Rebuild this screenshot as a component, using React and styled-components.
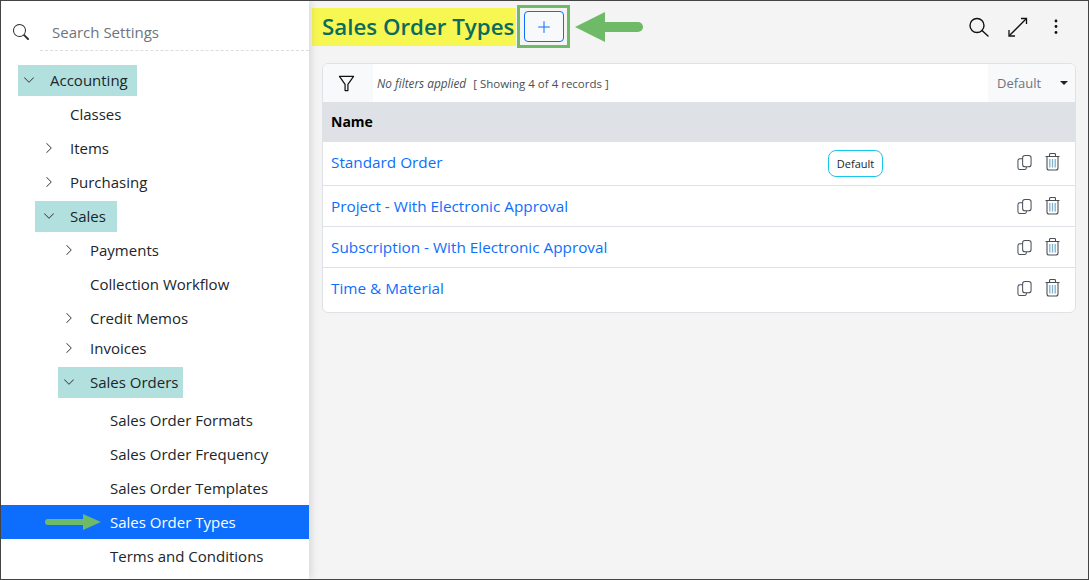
import React from 'react'
import styled, { createGlobalStyle } from 'styled-components'
import { BsSearch, BsChevronDown, BsChevronRight, BsPlusLg } from 'react-icons/bs'

const Global = createGlobalStyle`
  html, body { margin: 0; padding: 0; }
  body { font-family: "Open Sans", "Noto Sans", "Liberation Sans", sans-serif; color: #212529; }
  * { box-sizing: border-box; }
`

const menu = [
  { label: 'Accounting', depth: 0, open: true, mark: true, h: 34, end: 9 },
  { label: 'Classes', depth: 1, h: 34 },
  { label: 'Items', depth: 1, closed: true, h: 34 },
  { label: 'Purchasing', depth: 1, closed: true, h: 34 },
  { label: 'Sales', depth: 1, open: true, mark: true, h: 34, start: 3, end: 11 },
  { label: 'Payments', depth: 2, closed: true, h: 34 },
  { label: 'Collection Workflow', depth: 2, h: 34 },
  { label: 'Credit Memos', depth: 2, closed: true, h: 34 },
  { label: 'Invoices', depth: 2, closed: true, h: 26 },
  { label: 'Sales Orders', depth: 2, open: true, mark: true, h: 42, end: 4 },
  { label: 'Sales Order Formats', depth: 3, h: 34 },
  { label: 'Sales Order Frequency', depth: 3, h: 34 },
  { label: 'Sales Order Templates', depth: 3, h: 34 },
  { label: 'Sales Order Types', depth: 3, active: true, h: 34 },
  { label: 'Terms and Conditions', depth: 3, h: 34 },
]

const records = [
  { name: 'Standard Order', isDefault: true, h: 44, pad: 3 },
  { name: 'Project - With Electronic Approval', h: 41, pad: 0 },
  { name: 'Subscription - With Electronic Approval', h: 41, pad: 0 },
  { name: 'Time & Material', h: 44, pad: 4 },
]

const Window = styled.div`
  width: 1089px;
  height: 580px;
  display: flex;
  overflow: hidden;
  border: 1px solid #444;
  background: #f4f4f4;
`

const Sidebar = styled.aside`
  width: 308px;
  flex: none;
  background: #fff;
  box-shadow: 2px 0 8px rgba(0, 0, 0, 0.12);
  position: relative;
`

const SearchRow = styled.div`
  height: 50px;
  display: flex;
  align-items: center;
  padding: 12px 0 0 12px;
  color: #333;
  font-size: 16px;
`

const SearchText = styled.div`
  flex: 1;
  height: 38px;
  margin-left: 11px;
  padding: 1px 0 0 12px;
  display: flex;
  align-items: center;
  font-size: 15px;
  color: #6c757d;
  border-bottom: 1px dashed #ddd;
`

const Tree = styled.div`
  margin-top: 12px;
`

const Row = styled.div`
  display: flex;
  align-items: center;
  height: ${(p) => p.$h}px;
  padding-left: ${(p) => p.$depth * 20 + 17}px;
  font-size: 15px;
  background: ${(p) => (p.$active ? '#0d6efd' : 'transparent')};
  color: ${(p) => (p.$active ? '#fff' : '#212529')};
  position: relative;
`

const Label = styled.div`
  display: flex;
  align-items: center;
  height: 31px;
  margin-left: ${(p) => -p.$start}px;
  padding-left: ${(p) => p.$start}px;
  padding-right: ${(p) => p.$end}px;
  background: ${(p) => (p.$mark ? '#b2e0df' : 'transparent')};
`

const Caret = styled.span`
  width: 32px;
  flex: none;
  display: flex;
  justify-content: flex-start;
  padding-left: 5px;
  font-size: 12px;
  color: #333;
`

const SideArrow = styled.svg`
  position: absolute;
  left: 43px;
  top: 8px;
`

const Main = styled.main`
  flex: 1;
  padding: 4px 12px 0 13px;
  min-width: 0;
`

const TopBar = styled.div`
  display: flex;
  align-items: center;
  height: 43px;
  margin-left: -10px;
`

const Title = styled.h1`
  align-self: flex-start;
  margin: 3px 0 0;
  height: 38px;
  padding: 0 2px 2px 10px;
  display: flex;
  align-items: center;
  background: #f7f752;
  color: #0b6b5c;
  font-size: 22.3px;
  font-weight: 600;
  white-space: nowrap;
`

const AddFrame = styled.div`
  width: 53px;
  height: 43px;
  flex: none;
  margin-left: 1px;
  display: flex;
  align-items: center;
  justify-content: center;
  border: 3px solid #6fba67;
`

const AddButton = styled.button`
  width: 40px;
  height: 31px;
  padding: 0;
  display: flex;
  align-items: center;
  justify-content: center;
  background: #f8f9fa;
  border: 1px solid #0d6efd;
  border-radius: 4px;
  color: #0d6efd;
  font-size: 16px;
`

const BigArrow = styled.svg`
  margin-left: 5px;
`

const Tools = styled.div`
  margin-left: auto;
  display: flex;
  align-items: center;
  gap: 18px;
  padding-right: 10px;
  color: #111;
`

const Card = styled.section`
  margin-top: 15px;
  border: 1px solid #dee2e6;
  border-radius: 6px;
  background: #fff;
  overflow: hidden;
`

const FilterBar = styled.div`
  height: 38px;
  display: flex;
  align-items: center;
  color: #495057;
`

const FunnelCell = styled.div`
  width: 50px;
  height: 100%;
  display: flex;
  align-items: center;
  justify-content: center;
  padding-right: 4px;
  background: #f8f9fa;
  color: #111;
`

const FilterNote = styled.em`
  margin-left: 4px;
  font-size: 11.8px;
`

const Count = styled.span`
  margin-left: 7px;
  font-size: 11.5px;
`

const ViewSelect = styled.div`
  margin-left: auto;
  width: 87px;
  height: 100%;
  display: flex;
  align-items: center;
  justify-content: space-between;
  padding: 0 7px 0 9px;
  background: #f8f9fa;
  color: #6c757d;
  font-size: 13px;
`

const DownTip = styled.i`
  width: 0;
  height: 0;
  border-left: 4px solid transparent;
  border-right: 4px solid transparent;
  border-top: 4px solid #222;
`

const HeadRow = styled.div`
  height: 40px;
  display: flex;
  align-items: center;
  padding: 0 0 2px 8px;
  background: #dee2e6;
  color: #000;
  font-size: 14px;
  font-weight: 700;
`

const RecordRow = styled.div`
  height: ${(p) => p.$h}px;
  display: flex;
  align-items: center;
  padding: 0 15px ${(p) => p.$pad}px 8px;
  border-bottom: 1px solid #dee2e6;
  &:last-child { border-bottom: 0; }
`

const RecordLink = styled.a`
  width: 497px;
  flex: none;
  color: #0d6efd;
  font-size: 15.3px;
`

const Badge = styled.span`
  width: 55px;
  height: 27px;
  margin-top: 3px;
  display: flex;
  align-items: center;
  justify-content: center;
  border: 1px solid #17c6ee;
  border-radius: 8px;
  font-size: 11px;
`

const Actions = styled.div`
  margin-left: auto;
  display: flex;
  align-items: center;
  gap: 13px;
  color: #495057;
`

const SearchIcon = () => (
  <svg width="20" height="20" viewBox="0 0 20 20" fill="none" stroke="currentColor" strokeWidth="1.4">
    <circle cx="8" cy="8.5" r="7" />
    <path d="M13 13.5L19 19" strokeLinecap="round" />
  </svg>
)

const ExpandIcon = () => (
  <svg width="21" height="20" viewBox="0 0 21 20" fill="none" stroke="currentColor" strokeWidth="1.3">
    <path d="M2.5 18.5L19 2" />
    <path d="M14 1.5H19.5V7" />
    <path d="M2 13V19H8" />
  </svg>
)

const DotsIcon = () => (
  <svg width="20" height="20" viewBox="0 0 20 20" fill="currentColor">
    <circle cx="10" cy="4" r="1.4" />
    <circle cx="10" cy="9.5" r="1.4" />
    <circle cx="10" cy="15.5" r="1.4" />
  </svg>
)

const FunnelIcon = () => (
  <svg width="17" height="17" viewBox="0 0 18 18" fill="none" stroke="currentColor" strokeWidth="1.3" strokeLinejoin="round">
    <path d="M1.5 1.5H16.5L10.5 10V16.5H7.5V10Z" />
  </svg>
)

const CopyIcon = () => (
  <svg width="15" height="17" viewBox="0 0 16 17" fill="none" stroke="currentColor" strokeWidth="1.1">
    <rect x="6" y="1" width="9" height="12" rx="2.5" />
    <path d="M6 4.5H3A2 2 0 0 0 1 6.5V14A2 2 0 0 0 3 16H8A2 2 0 0 0 10 14V13" />
  </svg>
)

const TrashIcon = () => (
  <svg width="15" height="18" viewBox="0 0 15 18" fill="none" stroke="currentColor" strokeWidth="1.1">
    <path d="M0.5 3.5H14.5" />
    <path d="M4.5 3V1.5A1 1 0 0 1 5.5 0.5H9.5A1 1 0 0 1 10.5 1.5V3" />
    <path d="M2 3.5V15A2 2 0 0 0 4 17H11A2 2 0 0 0 13 15V3.5" />
    <path d="M4.8 6V14.5M7.5 6V14.5M10.2 6V14.5" stroke="#7fb0cf" strokeWidth="1.3" />
  </svg>
)

function MenuRow({ item }) {
  return (
    <Row $h={item.h} $depth={item.depth} $active={item.active}>
      {item.active && (
        <SideArrow width="58" height="18" viewBox="0 0 58 18">
          <path d="M4 9H40" stroke="#6fba67" strokeWidth="6" strokeLinecap="round" />
          <path d="M39 1L57 9L39 17Z" fill="#6fba67" />
        </SideArrow>
      )}
      <Label $mark={item.mark} $start={item.start || 0} $end={item.end || 0}>
        <Caret>
          {item.open && <BsChevronDown />}
          {item.closed && <BsChevronRight />}
        </Caret>
        {item.label}
      </Label>
    </Row>
  )
}

export default function App() {
  return (
    <>
      <Global />
      <Window>
        <Sidebar>
          <SearchRow>
            <BsSearch />
            <SearchText>Search Settings</SearchText>
          </SearchRow>
          <Tree>
            {menu.map((item) => (
              <MenuRow key={item.label} item={item} />
            ))}
          </Tree>
        </Sidebar>
        <Main>
          <TopBar>
            <Title>Sales Order Types</Title>
            <AddFrame>
              <AddButton>
                <BsPlusLg />
              </AddButton>
            </AddFrame>
            <BigArrow width="68" height="32" viewBox="0 0 68 32">
              <path d="M30 16H63" stroke="#6fba67" strokeWidth="10" strokeLinecap="round" />
              <path d="M0 16L30 1V31Z" fill="#6fba67" />
            </BigArrow>
            <Tools>
              <SearchIcon />
              <ExpandIcon />
              <DotsIcon />
            </Tools>
          </TopBar>
          <Card>
            <FilterBar>
              <FunnelCell>
                <FunnelIcon />
              </FunnelCell>
              <FilterNote>No filters applied</FilterNote>
              <Count>[ Showing 4 of 4 records ]</Count>
              <ViewSelect>
                Default
                <DownTip />
              </ViewSelect>
            </FilterBar>
            <HeadRow>Name</HeadRow>
            {records.map((r) => (
              <RecordRow key={r.name} $h={r.h} $pad={r.pad}>
                <RecordLink>{r.name}</RecordLink>
                {r.isDefault && <Badge>Default</Badge>}
                <Actions>
                  <CopyIcon />
                  <TrashIcon />
                </Actions>
              </RecordRow>
            ))}
          </Card>
        </Main>
      </Window>
    </>
  )
}
